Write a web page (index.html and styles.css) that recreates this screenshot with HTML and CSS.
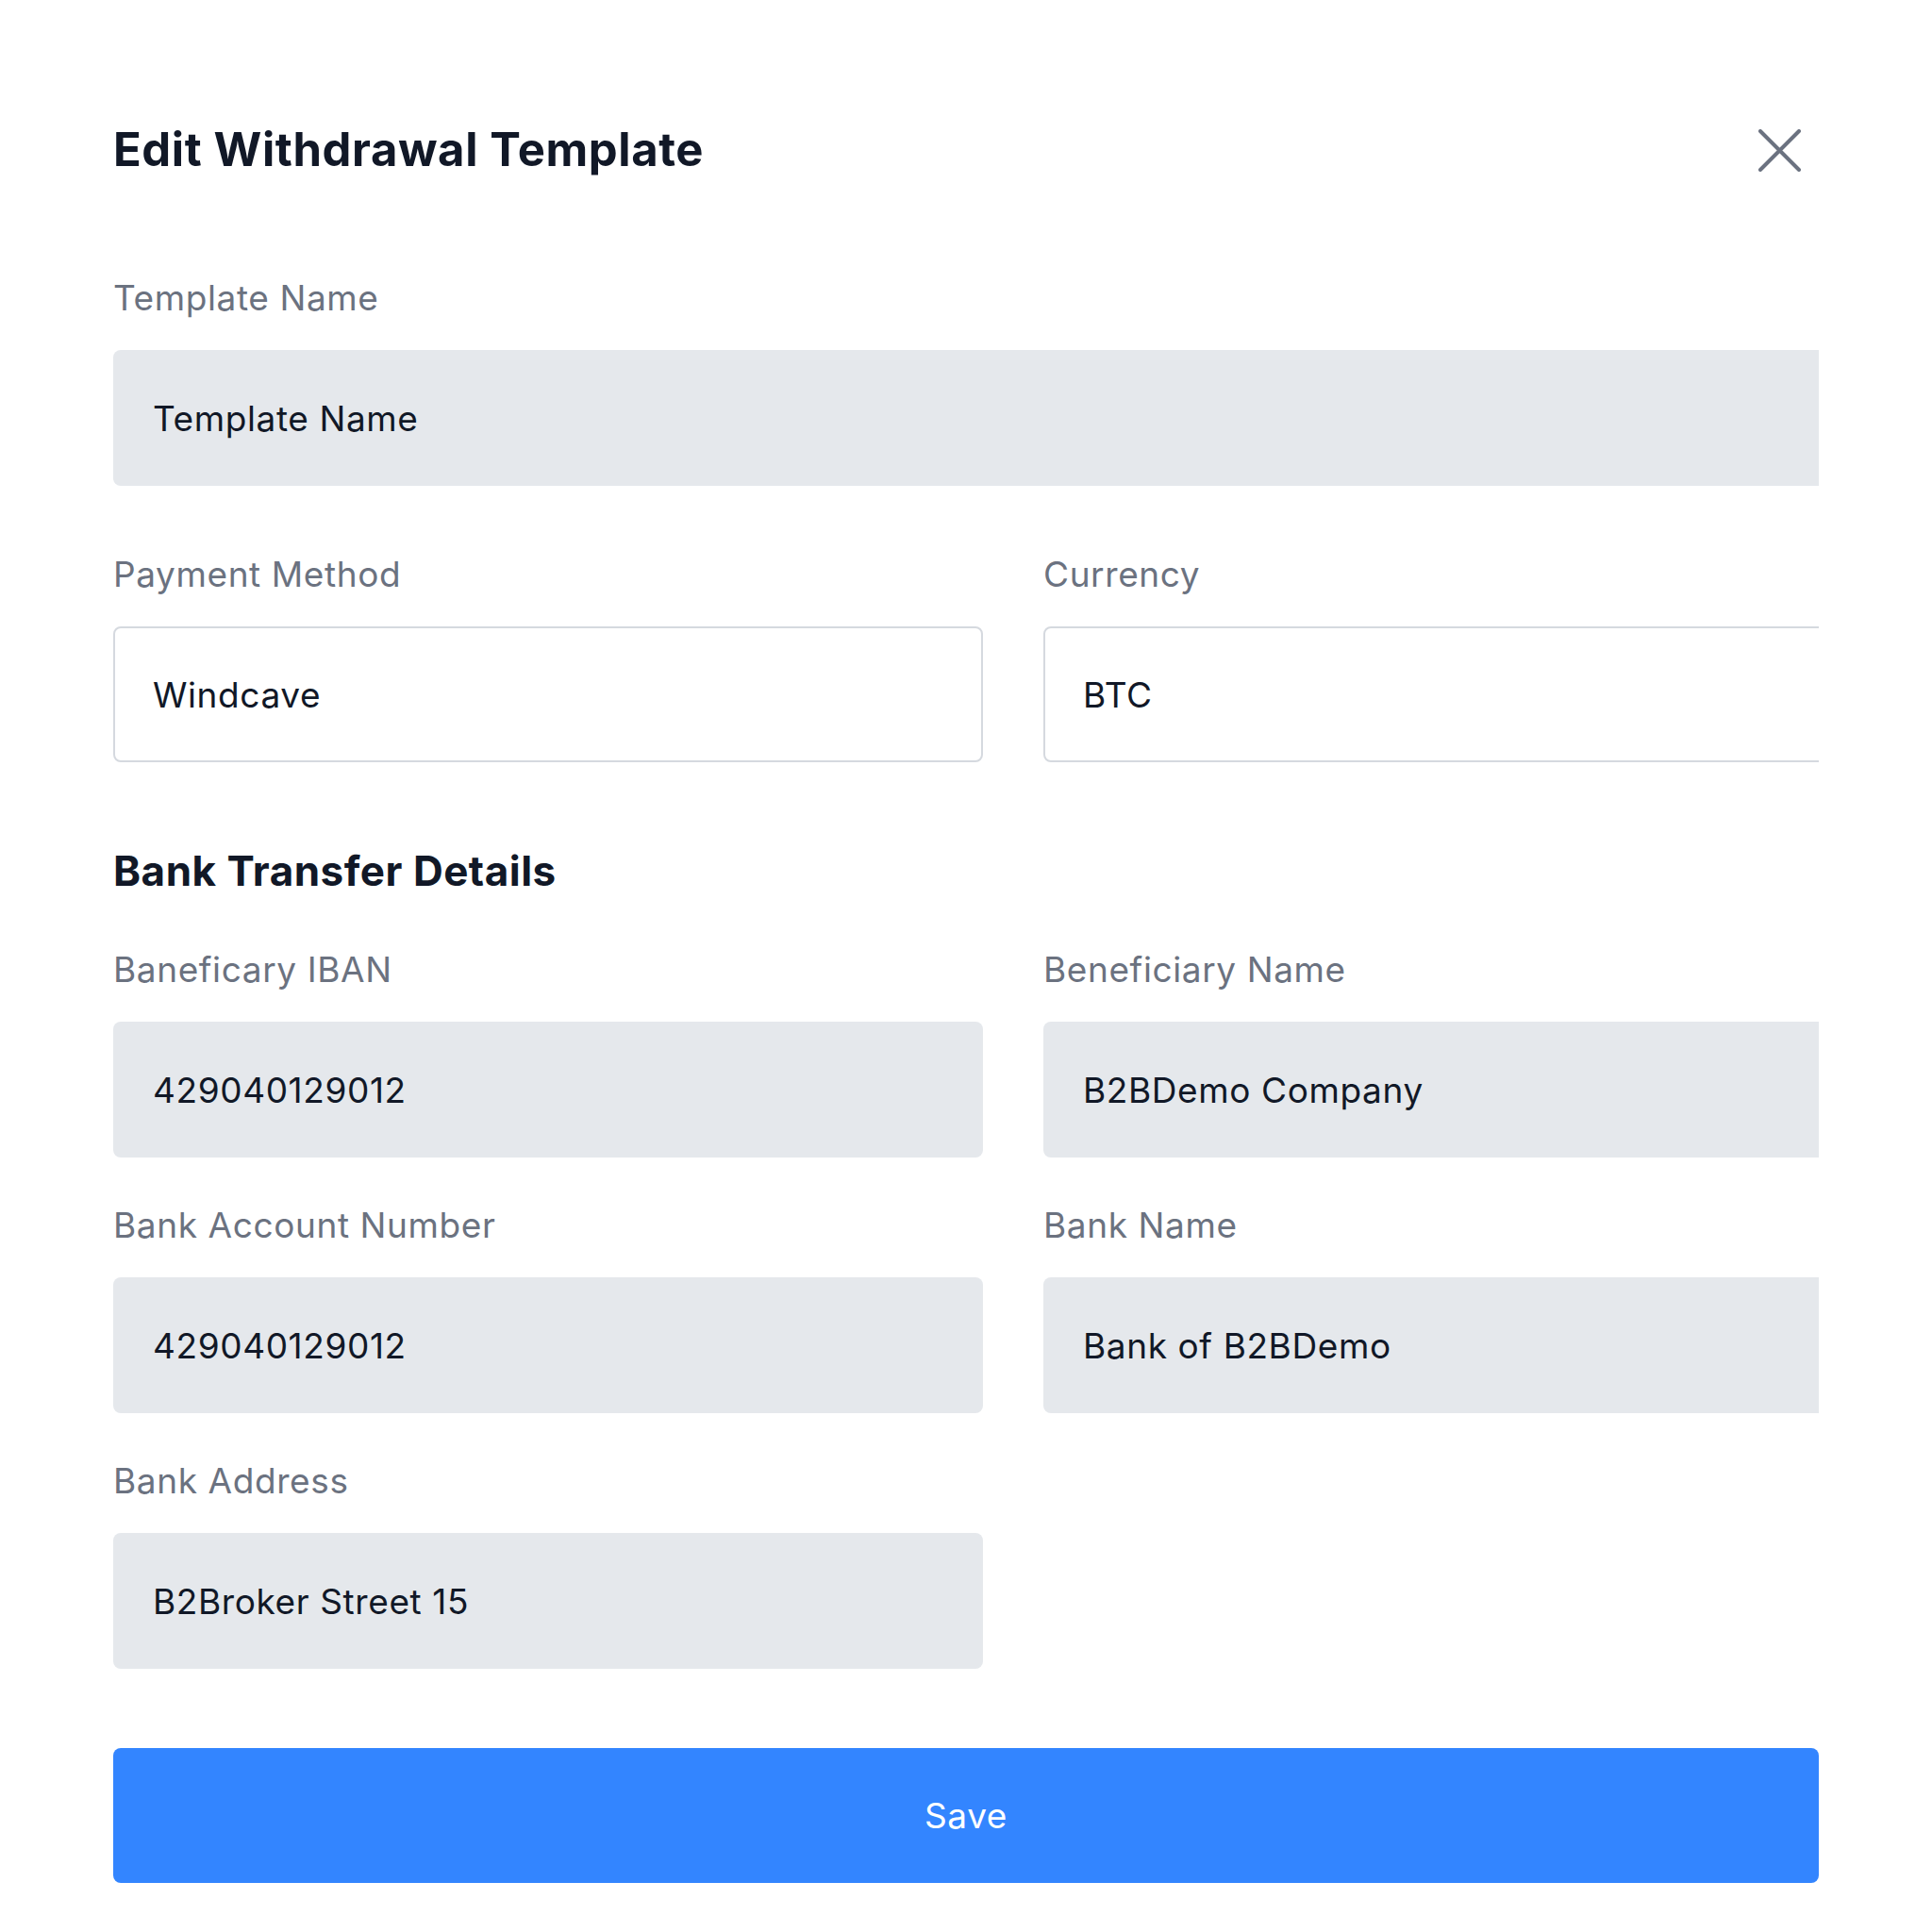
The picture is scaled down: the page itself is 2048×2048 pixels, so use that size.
FILE: index.html
```html
<!DOCTYPE html>
<html lang="en">
<head>
  <meta charset="UTF-8">
  <meta name="viewport" content="width=device-width, initial-scale=1">
  <title>Edit Withdrawal Template</title>
  <link rel="stylesheet" href="styles.css">
</head>
<body>
  <div class="modal">
    <div class="modal-header">
      <h1>Edit Withdrawal Template</h1>
      <button class="close" aria-label="Close">
        <svg width="45" height="45" viewBox="0 0 45 45" fill="none" stroke="#6b7280" stroke-width="4" stroke-linecap="round">
          <path d="M2 2L43 43M43 2L2 43"/>
        </svg>
      </button>
    </div>

    <div class="form-grid">
      <div class="field wide">
        <label>Template Name</label>
        <input type="text" class="filled" value="Template Name" readonly>
      </div>
    </div>

    <div class="form-grid top-row">
      <div class="field">
        <label>Payment Method</label>
        <input type="text" class="outlined" value="Windcave" readonly>
      </div>
      <div class="field">
        <label>Currency</label>
        <input type="text" class="outlined" value="BTC" readonly>
      </div>
    </div>

    <h2>Bank Transfer Details</h2>

    <div class="form-grid">
      <div class="field">
        <label>Baneficary IBAN</label>
        <input type="text" class="filled" value="429040129012" readonly>
      </div>
      <div class="field">
        <label>Beneficiary Name</label>
        <input type="text" class="filled" value="B2BDemo Company" readonly>
      </div>
      <div class="field">
        <label>Bank Account Number</label>
        <input type="text" class="filled" value="429040129012" readonly>
      </div>
      <div class="field">
        <label>Bank Name</label>
        <input type="text" class="filled" value="Bank of B2BDemo" readonly>
      </div>
      <div class="field">
        <label>Bank Address</label>
        <input type="text" class="filled" value="B2Broker Street 15" readonly>
      </div>
    </div>

    <button class="save">Save</button>
  </div>
</body>
</html>
```

FILE: styles.css
```css
body {
  margin: 0;
  background: #fff;
  font-family: Inter, "Noto Sans", sans-serif;
  color: #111827;
}

.modal {
  width: 1808px;
  margin: 0 120px;
  padding: 130px 0 40px;
  overflow: hidden;
}

.modal-header {
  display: flex;
  justify-content: space-between;
  align-items: center;
  margin-bottom: 106px;
}

h1 {
  margin: 0;
  font-size: 49px;
  line-height: 58px;
  font-weight: 700;
  letter-spacing: 0.6px;
}

.close {
  border: none;
  background: none;
  padding: 0;
  margin-right: 19px;
  display: flex;
  cursor: pointer;
}

.form-grid {
  display: grid;
  grid-template-columns: repeat(2, 922px);
  column-gap: 64px;
  row-gap: 50px;
}

.form-grid.top-row {
  margin-top: 72px;
}

.field.wide {
  grid-column: 1 / -1;
}

.field {
  display: flex;
  flex-direction: column;
}

label {
  font-size: 37px;
  line-height: 44px;
  letter-spacing: 0.6px;
  color: #6b7280;
  margin-bottom: 33px;
}

input {
  box-sizing: border-box;
  height: 144px;
  width: 100%;
  padding: 0 40px;
  font-family: Inter, "Noto Sans", sans-serif;
  font-size: 37px;
  letter-spacing: 0.6px;
  color: #111827;
  border: 2px solid transparent;
  border-radius: 8px;
  outline: none;
}

input.filled {
  background: #e5e8ec;
}

input.outlined {
  background: #fff;
  border-color: #d5d9df;
}

h2 {
  margin: 89px 0 57px;
  font-size: 44px;
  line-height: 52px;
  font-weight: 700;
  letter-spacing: 0.5px;
}

.save {
  display: block;
  width: 100%;
  height: 143px;
  margin-top: 84px;
  border: none;
  border-radius: 8px;
  background: #3385ff;
  color: #fff;
  font-family: Inter, "Noto Sans", sans-serif;
  font-size: 37px;
  letter-spacing: 0.6px;
  cursor: pointer;
}
```
